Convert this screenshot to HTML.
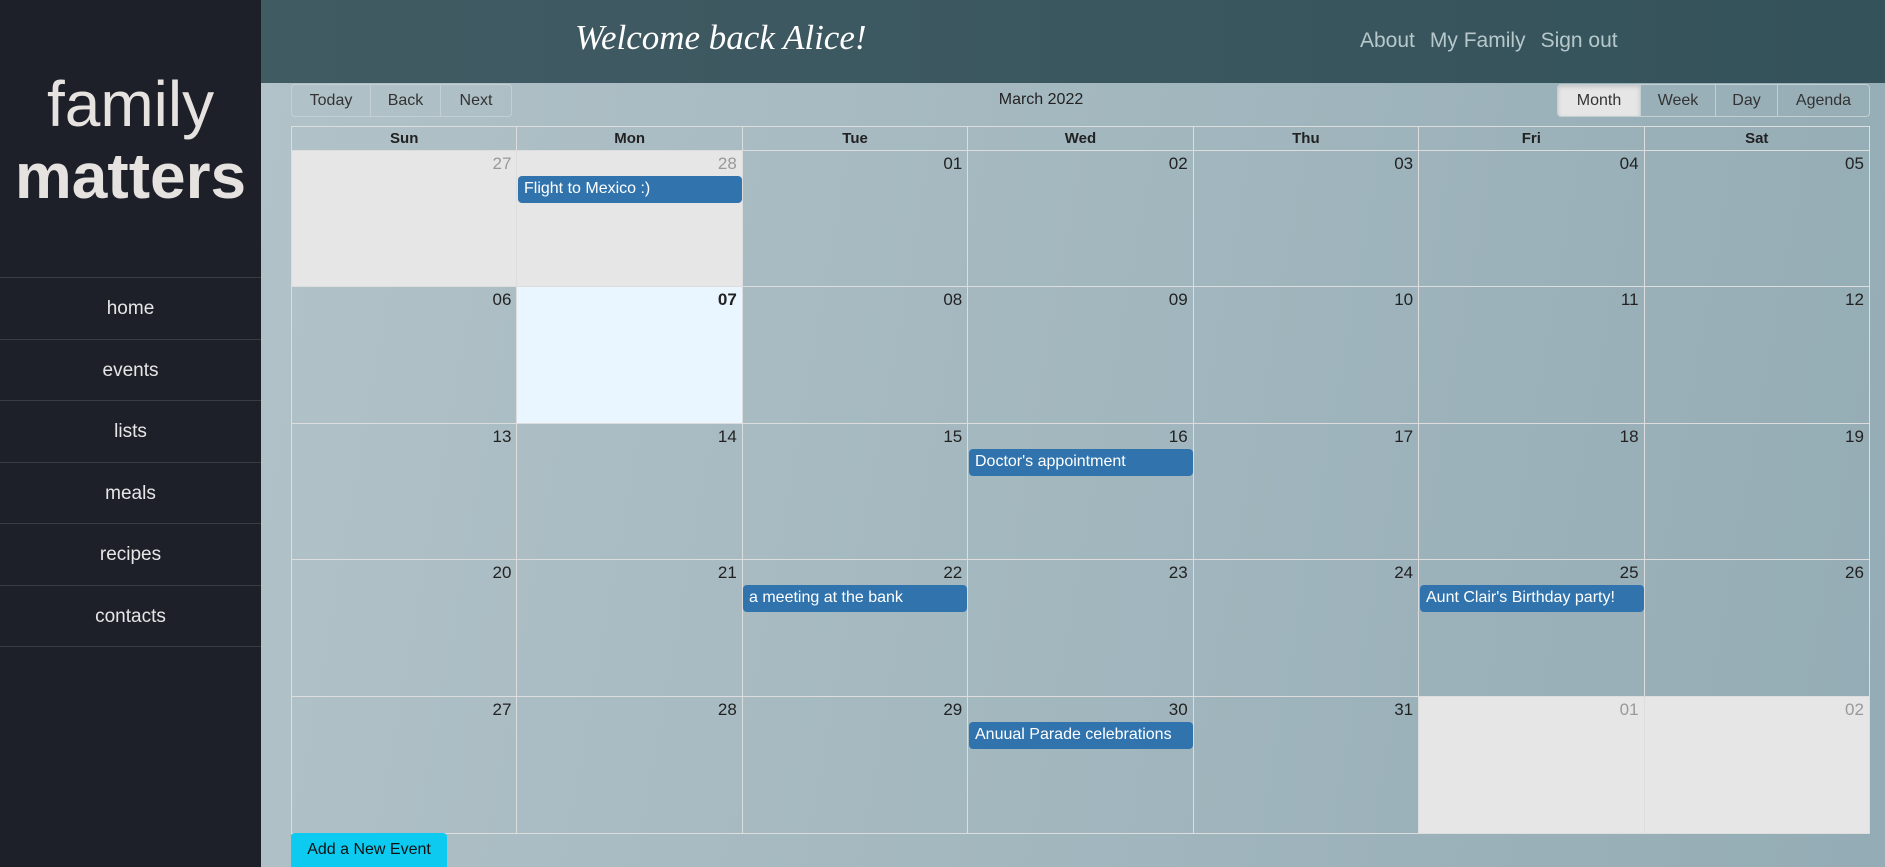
<!DOCTYPE html>
<html><head><meta charset="utf-8"><style>
*{box-sizing:border-box;margin:0;padding:0}
body{width:1885px;height:867px;overflow:hidden;font-family:"Liberation Sans",sans-serif;position:relative;background:linear-gradient(100deg,#b6c5cb,#94acb5)}
.side{position:absolute;left:0;top:0;width:261px;height:867px;background:#1e2029}
.logo{position:absolute;left:0;width:261px;text-align:center;color:#e6e2df;font-size:64px;line-height:1}
.nav{position:absolute;left:0;top:277px;width:261px;border-top:1px solid #3a3c44}
.nav div{height:61.5px;border-bottom:1px solid #3a3c44;color:#e6e6e6;font-size:19px;text-align:center;line-height:61px}
.head{position:absolute;left:261px;top:0;right:0;height:83px;background:linear-gradient(90deg,#415b63,#34525a)}
.welcome{position:absolute;left:314px;top:18px;color:#fff;font-family:"Liberation Serif",serif;font-style:italic;font-size:35px;white-space:nowrap}
.links{position:absolute;left:1099px;top:29px;color:#b7c8cc;font-size:21px;white-space:nowrap}
.links span{margin-right:15px}
.btns{position:absolute;top:84px;height:33px;display:flex;border:1px solid #c4cfd3;border-radius:4px;overflow:hidden}
.btns div{border-right:1px solid #c4cfd3;color:#333;font-size:16px;line-height:31px;text-align:center}
.btns div:last-child{border-right:none}
.title{position:absolute;left:941px;width:200px;top:91px;text-align:center;font-size:16px;color:#222}
.cal{position:absolute;left:291px;top:126px;width:1579px;border:1px solid #ddd}
.hrow{display:flex;height:24px;border-bottom:1px solid #ddd}
.hrow div{flex:1;text-align:center;font-weight:bold;font-size:15px;line-height:23px;color:#222;border-left:1px solid #ddd}
.hrow div:first-child,.row div.c:first-child{border-left:none}
.row{display:flex;height:136.4px;border-bottom:1px solid #ddd;position:relative}
.row:last-child{border-bottom:none}
.c{flex:1;border-left:1px solid #ddd;text-align:right;padding:3px 5px;font-size:17px;color:#222}
.off{background:#e6e6e6;color:#999}
.today{background:#eaf6ff;font-weight:bold}
.ev{position:absolute;height:27px;background:#3174ad;color:#fff;border-radius:4px;font-size:16px;line-height:26px;padding-left:6px;top:25px;width:224px}
.add{position:absolute;left:291px;top:833px;width:156px;height:34px;background:#0dcaf0;border-radius:4px 4px 0 0;font-size:16px;line-height:34px;text-align:center;color:#111}
</style></head><body>
<div class="side">
<div class="logo" style="top:72px">family</div>
<div class="logo" style="top:144px;font-weight:bold">matters</div>
<div class="nav"><div>home</div><div>events</div><div>lists</div><div>meals</div><div>recipes</div><div>contacts</div></div>
</div>
<div class="head"><div class="welcome">Welcome back Alice!</div><div class="links"><span>About</span><span>My Family</span><span>Sign out</span></div></div>
<div class="btns" style="left:291px"><div style="width:79px">Today</div><div style="width:70px">Back</div><div style="width:70px">Next</div></div>
<div class="title">March 2022</div>
<div class="btns" style="left:1557px"><div style="width:83px;background:#e6e6e6;box-shadow:inset 0 2px 4px rgba(0,0,0,.15)">Month</div><div style="width:75px">Week</div><div style="width:62px">Day</div><div style="width:91px">Agenda</div></div>
<div class="cal">
<div class="hrow"><div>Sun</div><div>Mon</div><div>Tue</div><div>Wed</div><div>Thu</div><div>Fri</div><div>Sat</div></div>
<div class="row"><div class="c off">27</div><div class="c off">28</div><div class="c">01</div><div class="c">02</div><div class="c">03</div><div class="c">04</div><div class="c">05</div><div class="ev" style="left:226px">Flight to Mexico :)</div></div>
<div class="row"><div class="c">06</div><div class="c today">07</div><div class="c">08</div><div class="c">09</div><div class="c">10</div><div class="c">11</div><div class="c">12</div></div>
<div class="row"><div class="c">13</div><div class="c">14</div><div class="c">15</div><div class="c">16</div><div class="c">17</div><div class="c">18</div><div class="c">19</div><div class="ev" style="left:677px">Doctor's appointment</div></div>
<div class="row"><div class="c">20</div><div class="c">21</div><div class="c">22</div><div class="c">23</div><div class="c">24</div><div class="c">25</div><div class="c">26</div><div class="ev" style="left:451px">a meeting at the bank</div><div class="ev" style="left:1128px">Aunt Clair's Birthday party!</div></div>
<div class="row"><div class="c">27</div><div class="c">28</div><div class="c">29</div><div class="c">30</div><div class="c">31</div><div class="c off">01</div><div class="c off">02</div><div class="ev" style="left:677px">Anuual Parade celebrations</div></div>
</div>
<div class="add">Add a New Event</div>
</body></html>
